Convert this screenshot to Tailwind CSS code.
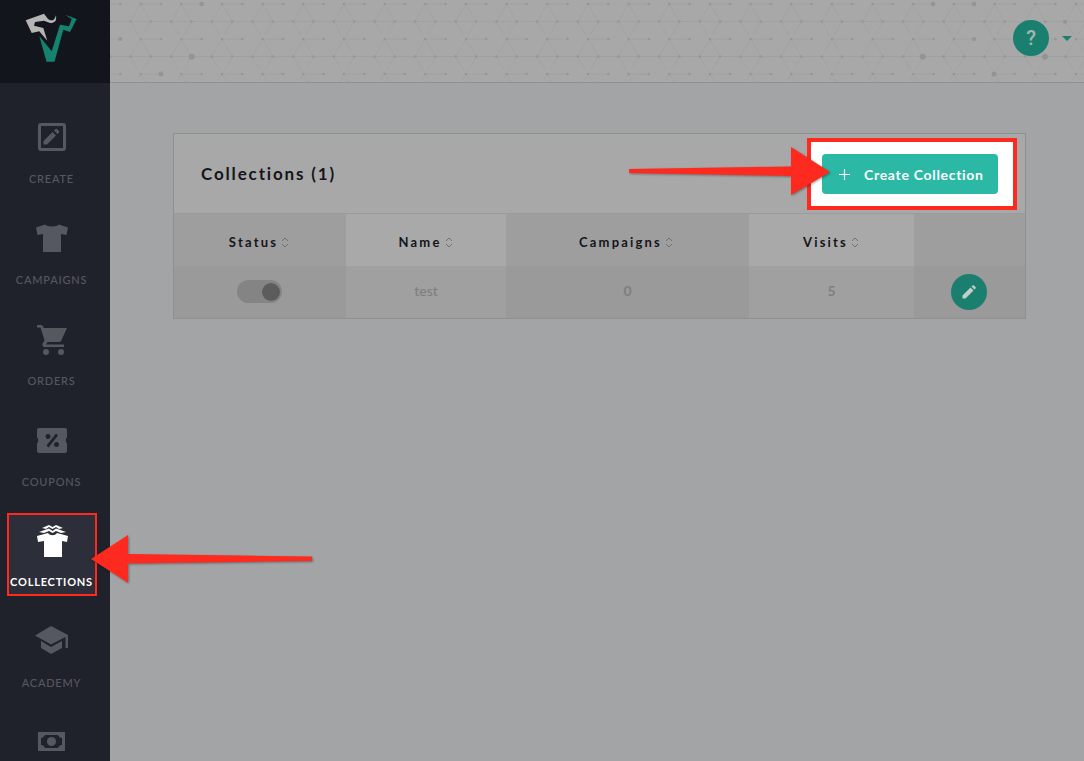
<!DOCTYPE html>
<html>
<head>
<meta charset="utf-8">
<title>Collections</title>
<script src="https://cdn.jsdelivr.net/npm/@tailwindcss/browser@4"></script>
</head>
<body class="font-['Lato',sans-serif] bg-[#a3a4a6] overflow-hidden">
<div class="relative flex h-[761px] w-[1084px] overflow-hidden">

    <!-- Sidebar -->
    <aside class="w-[110px] shrink-0 bg-[#1f222b] flex flex-col">
        <div class="h-[83px] shrink-0 bg-[#12151c]">
            <svg width="110" height="83" viewBox="0 0 110 83">
                <path d="M25.700 20.300 L44 13.700 L48 19 C50 20.500 52 20.500 53.300 20 C54.800 19 55.500 17 56 15.300 C56.500 18 56 20 55.300 21.300 C53 23 51 23.300 50 23 L44 20.700 L35 22 L34 25.700 L43.300 28 L47.300 40.700 L39.300 31.300 L31.700 33 Z" fill="#b5b5b5"/>
                <path d="M39.300 36 L46.500 61.700 L54.500 61.700 L63.300 29.700 L70 32 L76.700 19 L65 14.700 L71.700 19 L69 26.300 L60 24.700 L51.700 51.300 Z" fill="#14826c"/>
            </svg>
        </div>
        <nav class="flex flex-col gap-[18px] pt-[26px]">
            <a class="mx-[7px] w-[90px] h-[83px] shrink-0 border-2 border-transparent pr-[1px] flex flex-col items-center text-[#55585f]">
                <svg class="mt-[12px]" width="28" height="28" viewBox="0 0 28 28" fill="currentColor">
                    <path fill-rule="evenodd" d="M3 0H25a3 3 0 0 1 3 3V25a3 3 0 0 1-3 3H3a3 3 0 0 1-3-3V3A3 3 0 0 1 3 0ZM3 3V25H25V3Z"/>
                    <path d="M5.500 18 L14.500 9 L18 12.500 L9 21.500 H5.500 Z M16 7.500 L17.500 6 a1 1 0 0 1 1.400 0 L21 8.100 a1 1 0 0 1 0 1.400 L19.500 11 Z"/>
                </svg>
                <span class="mt-[21px] text-[11px] leading-[14px] font-medium tracking-[0.8px]">CREATE</span>
            </a>
            <a class="mx-[7px] w-[90px] h-[83px] shrink-0 border-2 border-transparent pr-[1px] flex flex-col items-center text-[#55585f]">
                <svg class="mt-[12px]" width="32" height="28" viewBox="0 0 32 28" fill="currentColor">
                    <path d="M0 3.500 L9 0.500 C11 3 21 3 23 0.500 L32 3.500 L30.500 11 L25 10 V28 H7 V10 L1.500 11 Z"/>
                </svg>
                <span class="mt-[21px] text-[11px] leading-[14px] font-medium tracking-[0.8px]">CAMPAIGNS</span>
            </a>
            <a class="mx-[7px] w-[90px] h-[83px] shrink-0 border-2 border-transparent pr-[1px] flex flex-col items-center text-[#55585f]">
                <svg class="mt-[12px]" width="30" height="30" viewBox="0 0 30 30" fill="currentColor">
                    <path d="M0 0 H5 L7 3 H30 L24.500 15 C24 16.500 23 17 21.500 17 H10.500 L9 19.500 H27 V22 H7 C6 22 5 20 5.500 18.500 L7.500 15.500 L3.500 2.500 H0 Z"/>
                    <circle cx="9" cy="27" r="3"/>
                    <circle cx="24" cy="27" r="3"/>
                </svg>
                <span class="mt-[19px] text-[11px] leading-[14px] font-medium tracking-[0.8px]">ORDERS</span>
            </a>
            <a class="mx-[7px] w-[90px] h-[83px] shrink-0 border-2 border-transparent pr-[1px] flex flex-col items-center text-[#55585f]">
                <svg class="mt-[14px]" width="30" height="25" viewBox="0 0 30 25" fill="currentColor">
                    <path fill-rule="evenodd" d="M2 0 H28 a2 2 0 0 1 2 2 V9.500 C28.500 10 28.500 15 30 15.500 V23 a2 2 0 0 1 -2 2 H2 a2 2 0 0 1 -2 -2 V15.500 C1.500 15 1.500 10 0 9.500 V2 a2 2 0 0 1 2 -2 Z M19 5.500 L9.500 17.500 L11.500 19.500 L21 7.500 Z M11 6 a2.500 2.500 0 1 0 0.010 0 Z M19.500 14 a2.500 2.500 0 1 0 0.010 0 Z"/>
                </svg>
                <span class="mt-[22px] text-[11px] leading-[14px] font-medium tracking-[0.8px]">COUPONS</span>
            </a>
            <a class="mx-[7px] w-[90px] h-[83px] shrink-0 border-2 border-[#ff2a1f] bg-[#2c2e3a] pr-[1px] flex flex-col items-center text-white">
                <svg class="mt-[3px]" width="46" height="44" viewBox="0 0 46 44" fill="currentColor">
                    <path d="M13 10 L20 7 L23.500 9 L27 7 L34 10 L30 11 L27 9 L23.500 11 L20 9 L17 11 Z"/>
                    <path d="M10 14 L20 10.500 L23.500 13 L27 10.500 L37 14 L32 15 L27 13 L23.500 15 L20 13 L15 15 Z"/>
                    <path d="M8 18 L19 15 C21 18 26 18 28 15 L39 18 L38 24 L33 23 V39 H15 V23 L9 24 Z"/>
                </svg>
                <span class="mt-[13px] text-[11px] leading-[14px] font-bold tracking-[0.8px]">COLLECTIONS</span>
            </a>
            <a class="mx-[7px] w-[90px] h-[83px] shrink-0 border-2 border-transparent pr-[1px] flex flex-col items-center text-[#55585f]">
                <svg class="mt-[10px]" width="33" height="28" viewBox="0 0 33 28" fill="currentColor">
                    <path d="M16 0 L33 9 V22 H30.500 V11 L16 18.500 L0 9.500 Z"/>
                    <path d="M6 15 L16 21 L27 15 V22 L16 28 L6 22 Z"/>
                </svg>
                <span class="mt-[22px] text-[11px] leading-[14px] font-medium tracking-[0.8px]">ACADEMY</span>
            </a>
            <a class="mx-[7px] w-[90px] h-[83px] shrink-0 border-2 border-transparent pr-[1px] flex flex-col items-center text-[#55585f]">
                <svg class="mt-[15px]" width="27" height="19" viewBox="0 0 27 19" fill="currentColor">
                    <path fill-rule="evenodd" d="M0 0 H27 V19 H0 Z M7 3 C6 5 4 6 3 6 V13 C5 13 6 14 7 16 H20 C21 14 22 13 24 13 V6 C22 6 21 5 20 3 Z"/>
                    <circle cx="13.500" cy="9.500" r="4.500"/>
                </svg>
            </a>
        </nav>
    </aside>

    <div class="flex-1 flex flex-col">
        <!-- Top bar with dotted hex background -->
        <header class="relative h-[83px] shrink-0 bg-[#a8a8a9] border-b border-[#8e918e] flex items-center justify-end pr-[12px] pb-[6px] gap-[13px]">
            <svg class="absolute inset-0" width="974" height="82">
                <defs>
                    <pattern id="hex" width="40.660" height="35" patternUnits="userSpaceOnUse" patternTransform="translate(30.670 0)">
                        <path d="M0 4 L10.170 21.500 L0 39 M40.660 4 L30.490 21.500 L40.660 39 M0 21.500 H40.660 M0 4 H20.330 M0 4 L-10.170 21.500" stroke="#9d9d9e" stroke-width="0.600" fill="none"/>
                        <circle cx="0" cy="4" r="1.200" fill="#949495"/>
                        <circle cx="40.660" cy="4" r="1.200" fill="#949495"/>
                        <circle cx="20.330" cy="4" r="1.200" fill="#949495"/>
                        <circle cx="10.170" cy="21.500" r="1.200" fill="#949495"/>
                        <circle cx="30.500" cy="21.500" r="1.200" fill="#949495"/>
                    </pattern>
                </defs>
                <rect width="974" height="82" fill="url(#hex)"/>
                <g fill="#949495">
                    <circle cx="10.300" cy="39" r="2"/><circle cx="91.700" cy="4" r="2.300"/><circle cx="81.700" cy="56.700" r="3"/><circle cx="51" cy="74" r="2.500"/>
                    <circle cx="823" cy="4" r="2.300"/><circle cx="864" cy="4" r="2.300"/><circle cx="812.700" cy="56.700" r="3"/><circle cx="864" cy="39" r="2"/>
                    <circle cx="935" cy="56.700" r="3"/><circle cx="884" cy="74" r="2.500"/><circle cx="955" cy="21.700" r="2"/>
                </g>
            </svg>
            <div class="relative w-9 h-9 rounded-full bg-[#1b7f6f] flex items-center justify-center text-[#a7b5b1] text-[20px] font-medium font-['Roboto',sans-serif]">?</div>
            <div class="relative w-0 h-0 border-x-[5.5px] border-x-transparent border-t-[5.5px] border-t-[#1b7f6f]"></div>
        </header>

        <!-- Collections card -->
        <main class="pt-[50px] pl-[63px]">
            <div class="w-[853px] border border-[#8e918e] bg-[#a8a8a8]">
                <div class="h-[80px] flex items-center pl-[27px] border-b border-[#9b9b9b]">
                    <h2 class="text-[17px] font-bold tracking-[1.850px] text-[#14161a]">Collections (1)</h2>
                </div>
                <div class="grid grid-cols-[172px_160px_243px_165px_111px] text-[13px] font-bold tracking-[2.200px] text-[#14161a]">
                    <div class="h-[52px] pt-[5px] pr-[2px] bg-[#9e9e9e] flex items-center justify-center gap-[3px]">Status
                        <svg width="8" height="11" viewBox="0 0 8 11" fill="none" stroke="#6f7078"><path d="M1 4 L4 1 L7 4 M1 7 L4 10 L7 7"/></svg></div>
                    <div class="h-[52px] pt-[5px] pr-[1px] bg-[#a9a9a9] flex items-center justify-center gap-[3px]">Name
                        <svg width="8" height="11" viewBox="0 0 8 11" fill="none" stroke="#6f7078"><path d="M1 4 L4 1 L7 4 M1 7 L4 10 L7 7"/></svg></div>
                    <div class="h-[52px] pt-[5px] pr-[3px] bg-[#9e9e9e] flex items-center justify-center gap-[3px]">Campaigns
                        <svg width="8" height="11" viewBox="0 0 8 11" fill="none" stroke="#6f7078"><path d="M1 4 L4 1 L7 4 M1 7 L4 10 L7 7"/></svg></div>
                    <div class="h-[52px] pt-[5px] pr-[1px] bg-[#a9a9a9] flex items-center justify-center gap-[3px]">Visits
                        <svg width="8" height="11" viewBox="0 0 8 11" fill="none" stroke="#6f7078"><path d="M1 4 L4 1 L7 4 M1 7 L4 10 L7 7"/></svg></div>
                    <div class="h-[52px] bg-[#9e9e9e]"></div>
                </div>
                <div class="grid grid-cols-[172px_160px_243px_165px_111px] text-[14px] font-bold text-[#7f7f7f]">
                    <div class="h-[52px] pb-[1px] pr-[2px] bg-[#9a9a9a] flex items-center justify-center">
                        <div class="w-[45px] h-[23px] rounded-full bg-[#848484] flex items-center justify-end pr-[1px]">
                            <div class="w-[18px] h-[18px] rounded-full bg-[#5c5c5c] mr-[1px]"></div>
                        </div>
                    </div>
                    <div class="h-[52px] pb-[4px] bg-[#a0a0a0] flex items-center justify-center font-medium">test</div>
                    <div class="h-[52px] pb-[4px] bg-[#9a9a9a] flex items-center justify-center">0</div>
                    <div class="h-[52px] pb-[4px] bg-[#a0a0a0] flex items-center justify-center">5</div>
                    <div class="h-[52px] pr-[2px] bg-[#9a9a9a] flex items-center justify-center">
                        <div class="w-9 h-9 rounded-full bg-[#1b7f6f] flex items-center justify-center">
                            <svg width="14" height="14" viewBox="0 0 14 14" fill="#c3cdca"><path d="M0.500 10.500 L8.500 2.500 L11.500 5.500 L3.500 13.500 H0.500 Z M9.500 1.500 L10.500 0.500 a1 1 0 0 1 1.400 0 L13.500 2.100 a1 1 0 0 1 0 1.400 L12.500 4.500 Z"/></svg>
                        </div>
                    </div>
                </div>
            </div>
        </main>
    </div>

    <!-- Annotation: highlighted button -->
    <div class="absolute left-[807px] top-[138px] w-[210px] h-[72px] border-[4px] border-[#ff2a1f] bg-white flex items-center pl-[11px]">
        <div class="w-[176px] h-[40px] rounded-[4px] bg-[#2bb9a5] flex items-center pl-[17px] text-white text-[14px] font-bold tracking-[0.700px]">
            <svg width="11" height="11" viewBox="0 0 11 11" stroke="white" stroke-width="1.200"><path d="M5.500 0 V11 M0 5.500 H11"/></svg>
            <span class="ml-[14px]">Create Collection</span>
        </div>
    </div>

    <!-- Annotation arrows -->
    <svg class="absolute inset-0 drop-shadow-[1px_1px_1px_rgba(0,0,0,0.35)]" width="1084" height="761">
        <path d="M629 169 L791 166.500 V147 L830 172 L791 195 V176 L629 173 Z" fill="#ff2a1f"/>
        <path d="M312 556.500 L128 554 V535 L91 559 L128 582.700 V563.500 L312 561 Z" fill="#ff2a1f"/>
    </svg>
</div>
</body>
</html>
